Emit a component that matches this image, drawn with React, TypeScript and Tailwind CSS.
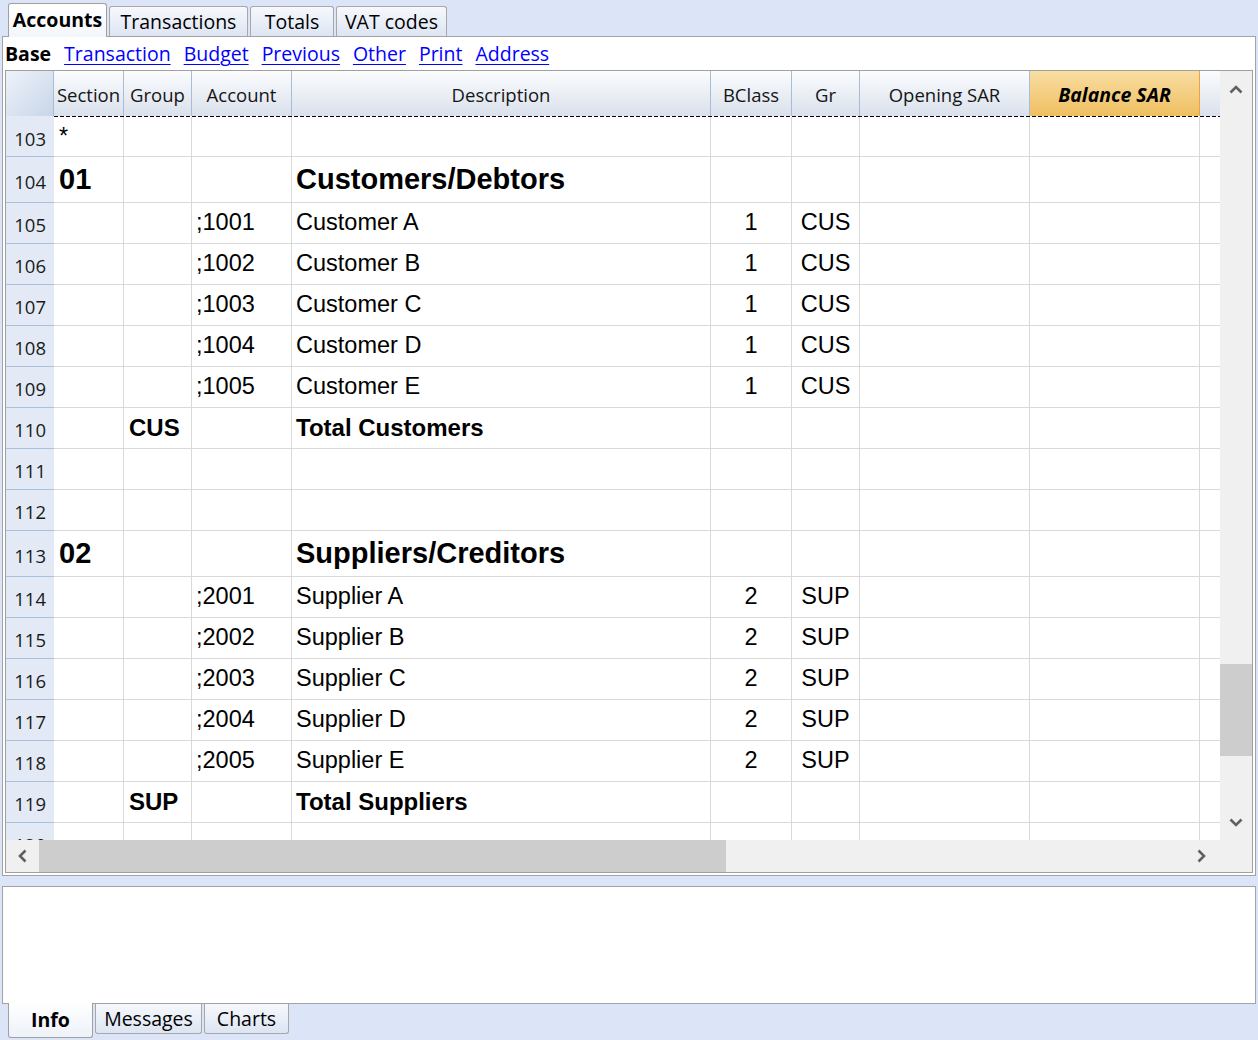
import React from "react";

type Kind = "blank" | "section" | "account" | "total";
interface RowData {
  n: number;
  kind: Kind;
  h: string;
  sec?: string;
  grp?: string;
  acc?: string;
  desc?: string;
  bc?: string;
  gr?: string;
}

const rows: RowData[] = [
  { n: 103, kind: "blank", h: "h-[40px]", sec: "*" },
  { n: 104, kind: "section", h: "h-[46px]", sec: "01", desc: "Customers/Debtors" },
  { n: 105, kind: "account", h: "h-[41px]", acc: ";1001", desc: "Customer A", bc: "1", gr: "CUS" },
  { n: 106, kind: "account", h: "h-[41px]", acc: ";1002", desc: "Customer B", bc: "1", gr: "CUS" },
  { n: 107, kind: "account", h: "h-[41px]", acc: ";1003", desc: "Customer C", bc: "1", gr: "CUS" },
  { n: 108, kind: "account", h: "h-[41px]", acc: ";1004", desc: "Customer D", bc: "1", gr: "CUS" },
  { n: 109, kind: "account", h: "h-[41px]", acc: ";1005", desc: "Customer E", bc: "1", gr: "CUS" },
  { n: 110, kind: "total", h: "h-[41px]", grp: "CUS", desc: "Total Customers" },
  { n: 111, kind: "blank", h: "h-[41px]" },
  { n: 112, kind: "blank", h: "h-[41px]" },
  { n: 113, kind: "section", h: "h-[46px]", sec: "02", desc: "Suppliers/Creditors" },
  { n: 114, kind: "account", h: "h-[41px]", acc: ";2001", desc: "Supplier A", bc: "2", gr: "SUP" },
  { n: 115, kind: "account", h: "h-[41px]", acc: ";2002", desc: "Supplier B", bc: "2", gr: "SUP" },
  { n: 116, kind: "account", h: "h-[41px]", acc: ";2003", desc: "Supplier C", bc: "2", gr: "SUP" },
  { n: 117, kind: "account", h: "h-[41px]", acc: ";2004", desc: "Supplier D", bc: "2", gr: "SUP" },
  { n: 118, kind: "account", h: "h-[41px]", acc: ";2005", desc: "Supplier E", bc: "2", gr: "SUP" },
  { n: 119, kind: "total", h: "h-[41px]", grp: "SUP", desc: "Total Suppliers" },
  { n: 120, kind: "blank", h: "h-[41px]" },
];

const COLS =
  "grid grid-cols-[48px_70px_68px_100px_419px_81px_68px_170px_170px_20px]";

const cell =
  "border-r border-b border-[#d9d9d9] flex items-center overflow-hidden whitespace-nowrap";

function Chevron({ dir }: { dir: "up" | "down" | "left" | "right" }) {
  if (dir === "up" || dir === "down") {
    const d = dir === "up" ? "M1.5 7.5 L7 2 L12.5 7.5" : "M1.5 1.5 L7 7 L12.5 1.5";
    return (
      <svg width="14" height="9" viewBox="0 0 14 9">
        <path d={d} stroke="#606060" strokeWidth="2.6" fill="none" />
      </svg>
    );
  }
  const d = dir === "left" ? "M7.5 1.5 L2 7 L7.5 12.5" : "M1.5 1.5 L7 7 L1.5 12.5";
  return (
    <svg width="9" height="14" viewBox="0 0 9 14">
      <path d={d} stroke="#606060" strokeWidth="2.6" fill="none" />
    </svg>
  );
}

function HeaderCell({ label }: { label: string }) {
  return (
    <div className="h-[45px] flex items-center justify-center pt-[2px] border-r border-[#a9bcd6] bg-gradient-to-b from-[#fbfcfe] to-[#dae1ec] text-[18.5px] text-[#151515] whitespace-nowrap overflow-hidden">
      {label}
    </div>
  );
}

function DataRow({ r }: { r: RowData }) {
  const txt =
    r.kind === "section"
      ? "text-[29px] font-bold"
      : r.kind === "total"
      ? "text-[24px] font-bold"
      : "text-[23.5px]";
  return (
    <div className={`${COLS} ${r.h} shrink-0`}>
      <div className="bg-[#e3eaf6] border-b border-[#aabfdb] flex items-center justify-end pr-[8px] pt-[4px] text-[18.5px] text-[#1a1a1a] font-['Open_Sans','Noto_Sans',sans-serif]">
        {r.n}
      </div>
      <div className={`${cell} pl-[5px] ${txt}`}>{r.sec}</div>
      <div className={`${cell} pl-[5px] ${txt}`}>{r.grp}</div>
      <div className={`${cell} pl-[4px] ${txt}`}>{r.acc}</div>
      <div className={`${cell} pl-[4px] ${txt}`}>{r.desc}</div>
      <div className={`${cell} justify-center ${txt}`}>{r.bc}</div>
      <div className={`${cell} justify-center ${txt}`}>{r.gr}</div>
      <div className={cell}></div>
      <div className={cell}></div>
      <div className="border-b border-[#d9d9d9]"></div>
    </div>
  );
}

export default function App() {
  const topTabs = [
    { label: "Transactions", w: "w-[139px]" },
    { label: "Totals", w: "w-[84px]" },
    { label: "VAT codes", w: "w-[111px]" },
  ];
  const links = ["Transaction", "Budget", "Previous", "Other", "Print", "Address"];

  return (
    <div className="w-[1258px] h-[1040px] overflow-hidden bg-[#dbe5f7] font-['Open_Sans','Noto_Sans',sans-serif] text-[#111]">
      {/* Top tabs */}
      <div className="h-[36px] flex items-end pl-[8px] gap-[2px]">
        <div className="relative z-10 w-[99px] h-[34px] -mb-px flex items-center justify-center pb-[2px] border-t border-l border-r border-[#a0a0a0] rounded-t-[3px] bg-gradient-to-b from-[#ffffff] to-[#f3f6fb] text-[19.5px] font-bold text-black">
          Accounts
        </div>
        {topTabs.map((t) => (
          <div
            key={t.label}
            className={`${t.w} h-[30px] flex items-center justify-center border-t border-l border-r border-[#a8a8a8] rounded-t-[3px] bg-gradient-to-b from-[#f6f8fc] to-[#dde5f3] text-[19.5px] text-black`}
          >
            {t.label}
          </div>
        ))}
      </div>

      {/* Main panel */}
      <div className="mx-[2px] h-[840px] border border-[#a3a3a3] bg-white flex flex-col">
        <div className="h-[33px] flex items-center pl-[2px] gap-[13px] text-[19.5px] shrink-0">
          <span className="font-bold text-black">Base</span>
          {links.map((l) => (
            <span key={l} className="text-[#0000ff] underline underline-offset-[3px] decoration-1">
              {l}
            </span>
          ))}
        </div>

        <div className="mx-[2px] h-[803px] border border-[#a0a0a0] flex">
          {/* table area */}
          <div className="w-[1214px] flex flex-col">
            <div className={COLS}>
              <div className="h-[45px] bg-gradient-to-br from-[#eef3fa] to-[#c8d5e9] border-r border-[#a9bcd6]"></div>
              <HeaderCell label="Section" />
              <HeaderCell label="Group" />
              <HeaderCell label="Account" />
              <HeaderCell label="Description" />
              <HeaderCell label="BClass" />
              <HeaderCell label="Gr" />
              <HeaderCell label="Opening SAR" />
              <div className="h-[45px] flex items-center justify-center pt-[2px] border-r border-[#f0a040] bg-gradient-to-b from-[#f9dda1] to-[#efbf5f] text-[19.5px] font-bold italic text-black whitespace-nowrap">
                Balance SAR
              </div>
              <div className="h-[45px] bg-gradient-to-b from-[#fbfcfe] to-[#dae1ec]"></div>
            </div>
            <div className="flex h-px shrink-0">
              <div className="w-[48px] bg-[#e3eaf6]"></div>
              <div className="flex-1 bg-[repeating-linear-gradient(90deg,#000_0px,#000_4px,transparent_4px,transparent_6px)]"></div>
            </div>
            <div className="h-[723px] overflow-hidden flex flex-col font-['Liberation_Sans',Arial,sans-serif] text-black">
              {rows.map((r) => (
                <DataRow key={r.n} r={r} />
              ))}
            </div>
            {/* horizontal scrollbar */}
            <div className="h-[32px] bg-[#f0f0f0] flex items-stretch shrink-0">
              <div className="w-[33px] flex items-center justify-center">
                <Chevron dir="left" />
              </div>
              <div className="w-[687px] bg-[#cdcdcd]"></div>
              <div className="flex-1"></div>
              <div className="w-[38px] flex items-center justify-center">
                <Chevron dir="right" />
              </div>
            </div>
          </div>
          {/* vertical scrollbar */}
          <div className="w-[32px] bg-[#f0f0f0] flex flex-col">
            <div className="h-[36px] flex items-center justify-center">
              <Chevron dir="up" />
            </div>
            <div className="h-[557px]"></div>
            <div className="h-[92px] bg-[#cdcdcd]"></div>
            <div className="h-[49px]"></div>
            <div className="h-[35px] flex items-center justify-center">
              <Chevron dir="down" />
            </div>
          </div>
        </div>
      </div>

      {/* gap */}
      <div className="h-[10px]"></div>

      {/* Info pane */}
      <div className="mx-[2px] h-[118px] border border-[#a3a3a3] bg-white"></div>
      <div className="flex items-start pl-[8px] gap-[2px]">
        <div className="relative z-10 -mt-px w-[85px] h-[35px] flex items-center justify-center pb-[1px] border-l border-r border-b border-[#a0a0a0] rounded-b-[3px] bg-gradient-to-b from-[#ffffff] to-[#edf2f9] text-[19.5px] font-bold text-black">
          Info
        </div>
        <div className="w-[107px] h-[30px] flex items-center justify-center border-l border-r border-b border-[#a8a8a8] rounded-b-[3px] bg-gradient-to-b from-[#f6f8fc] to-[#dde5f3] text-[19.5px] text-black">
          Messages
        </div>
        <div className="w-[85px] h-[30px] flex items-center justify-center border-l border-r border-b border-[#a8a8a8] rounded-b-[3px] bg-gradient-to-b from-[#f6f8fc] to-[#dde5f3] text-[19.5px] text-black">
          Charts
        </div>
      </div>
    </div>
  );
}
